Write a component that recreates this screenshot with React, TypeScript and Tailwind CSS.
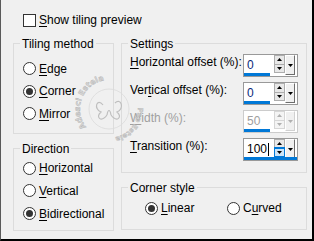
import React from 'react';

type SpinState = 'normal' | 'disabled' | 'focused';

function Key({ children }: { children: React.ReactNode }) {
  return <span className="underline decoration-1 underline-offset-[2px]">{children}</span>;
}

function Radio({ checked, children, className = '' }: { checked?: boolean; children: React.ReactNode; className?: string }) {
  return (
    <div className={`flex items-center gap-[3px] ${className}`}>
      <span className="w-[13px] h-[13px] rounded-full border border-[#333333] bg-white flex items-center justify-center shrink-0">
        {checked && <span className="w-[7px] h-[7px] rounded-full bg-[#333333]" />}
      </span>
      <span className="leading-[16px]">{children}</span>
    </div>
  );
}

function GroupBox({ title, className = '', children }: { title: string; className?: string; children: React.ReactNode }) {
  return (
    <div className={`relative border border-[#dcdcdc] ${className}`}>
      {/* title sits over the top border line */}
      <span className="absolute left-[6px] top-[-8px] px-[2px] bg-[#f0f0f0] leading-[16px] whitespace-nowrap">{title}</span>
      {children}
    </div>
  );
}

function Tri({ up, color }: { up?: boolean; color: string }) {
  return (
    <svg width="5" height="3" viewBox="0 0 5 3" className="block">
      <polygon points={up ? '0,3 5,3 2.5,0' : '0,0 5,0 2.5,3'} fill={color} />
    </svg>
  );
}

function Spinner({ value, state = 'normal' }: { value: string; state?: SpinState }) {
  const disabled = state === 'disabled';
  const focused = state === 'focused';
  const arrow = disabled ? '#b0b0b0' : '#000000';
  return (
    <div className={`relative w-[55px] h-[23px] bg-white border flex ${disabled ? 'border-[#cccccc]' : 'border-[#999999]'}`}>
      <div className={`flex-1 pl-[3px] pt-[2px] leading-[16px] flex items-start ${disabled ? 'text-[#a0a0a0]' : focused ? 'text-black' : 'text-[#0a2a7a]'}`}>
        {value}
        {focused && <span className="ml-[1px] mt-[2px] w-px h-[13px] bg-black" />}
      </div>
      <div className={`w-[11px] h-[18px] border flex flex-col ${disabled ? 'border-[#d6d6d6]' : 'border-[#adadad]'}`}>
        <div className={`flex-1 flex items-center justify-center ${disabled ? 'bg-[#f4f4f4]' : 'bg-[#e8e8e8]'}`}>
          <Tri up color={arrow} />
        </div>
        <div
          className={`flex-1 flex items-center justify-center border-t ${
            focused ? 'bg-[#cce4f7] border-[#0078d7] outline outline-1 outline-[#0078d7]' : disabled ? 'bg-[#f4f4f4] border-[#d6d6d6]' : 'bg-[#e8e8e8] border-[#adadad]'
          }`}
        >
          <Tri color={arrow} />
        </div>
      </div>
      <div
        className={`w-[10px] h-[20px] mr-[2px] bg-[#f0f0f0] border border-t-white border-l-white flex items-center justify-center ${
          disabled ? 'border-r-[#d0d0d0] border-b-[#d0d0d0]' : 'border-r-[#6d6d6d] border-b-[#6d6d6d]'
        }`}
      >
        <Tri color={arrow} />
      </div>
      <span className={`absolute bottom-0 left-0 h-[3px] bg-[#0078d7] ${focused ? 'right-0' : 'w-[26px]'}`} />
    </div>
  );
}

function SettingRow({ label, value, state }: { label: React.ReactNode; value: string; state?: SpinState }) {
  return (
    <div className="flex items-start justify-between h-[23px] pl-[8px] pr-[8px]">
      <span className={`leading-[16px] ${state === 'disabled' ? 'text-[#a0a0a0]' : ''}`}>{label}</span>
      <Spinner value={value} state={state} />
    </div>
  );
}

function Watermark() {
  return (
    <svg width="72" height="76" viewBox="0 0 72 76" className="absolute left-[72px] top-[72px] pointer-events-none">
      <defs>
        <path id="wm-ring" d="M 36,66 A 29,29 0 1,1 36,8 A 29,29 0 1,1 36,66" />
      </defs>
      <circle cx="36" cy="37" r="20" fill="none" stroke="#dadada" strokeWidth="0.8" />
      <text fontFamily="'DejaVu Sans', sans-serif" fontSize="8" fontWeight="bold" fill="#d8d8d8" stroke="#acacac" strokeWidth="0.35">
        <textPath href="#wm-ring" startOffset="26">Adesci Estela</textPath>
      </text>
      <text fontFamily="'DejaVu Sans', sans-serif" fontSize="7" fontWeight="bold" fill="#d8d8d8" stroke="#acacac" strokeWidth="0.35">
        <textPath href="#wm-ring" startOffset="135">Psp Estela</textPath>
      </text>
      <path d="M30 33 C24 25, 20 37, 28 40 C22 45, 28 51, 34 43 M42 31 C48 25, 52 37, 44 40 C50 45, 44 51, 38 43 M34 43 C35 37, 37 37, 38 43" fill="none" stroke="#bebebe" strokeWidth="1.2" />
    </svg>
  );
}

export default function App() {
  return (
    <div className="relative w-[314px] h-[241px] overflow-hidden bg-[#f0f0f0] border-l border-l-[#5a5a5a] border-r-2 border-b-2 border-r-black border-b-black text-[12px] text-black font-['Liberation_Sans',Arial,sans-serif]">
      <div className="flex items-center gap-[3px] pl-[22px] pt-[12px]">
        <span className="w-[13px] h-[13px] border border-[#333333] bg-white shrink-0" />
        <span className="leading-[16px]">
          <Key>S</Key>how tiling preview
        </span>
      </div>

      <div className="flex gap-[7px] pl-[12px] mt-[15px]">
        <div className="w-[101px] flex flex-col">
          <GroupBox title="Tiling method" className="h-[91px]">
            <div className="pl-[9px] pt-[13px] flex flex-col">
              <Radio className="h-[23px]"><Key>E</Key>dge</Radio>
              <Radio className="h-[22px]" checked><Key>C</Key>orner</Radio>
              <Radio className="h-[23px]"><Key>M</Key>irror</Radio>
            </div>
          </GroupBox>
          <GroupBox title="Direction" className="h-[83px] mt-[14px]">
            <div className="pl-[9px] pt-[8px] flex flex-col">
              <Radio className="h-[22px]"><Key>H</Key>orizontal</Radio>
              <Radio className="h-[23px]"><Key>V</Key>ertical</Radio>
              <Radio className="h-[23px]" checked><Key>B</Key>idirectional</Radio>
            </div>
          </GroupBox>
        </div>

        <div className="w-[186px] flex flex-col">
          <GroupBox title="Settings" className="h-[130px]">
            <div className="pt-[10px] flex flex-col gap-[5px]">
              <SettingRow label={<><Key>H</Key>orizontal offset (%):</>} value="0" />
              <SettingRow label={<>Ver<Key>t</Key>ical offset (%):</>} value="0" />
              <SettingRow label={<><Key>W</Key>idth (%):</>} value="50" state="disabled" />
              <SettingRow label={<><Key>T</Key>ransition (%):</>} value="100" state="focused" />
            </div>
          </GroupBox>
          <GroupBox title="Corner style" className="h-[43px] mt-[14px]">
            <div className="flex pl-[23px] pt-[9px]">
              <Radio className="h-[22px] w-[82px]" checked><Key>L</Key>inear</Radio>
              <Radio className="h-[22px]">C<Key>u</Key>rved</Radio>
            </div>
          </GroupBox>
        </div>
      </div>

      <Watermark />
    </div>
  );
}
